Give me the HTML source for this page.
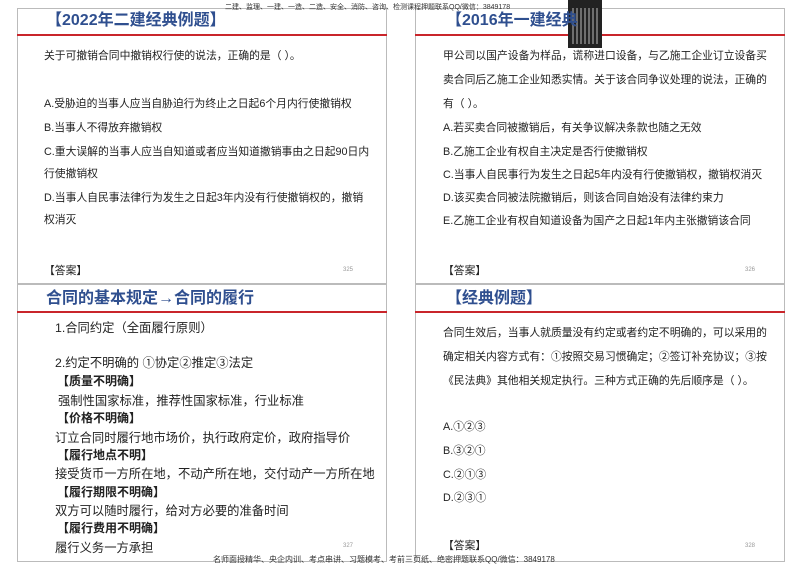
<!DOCTYPE html><html><head><meta charset="utf-8"><style>
body{margin:0;width:800px;height:566px;background:#fff;position:relative;overflow:hidden;font-family:"Liberation Sans","Noto Sans CJK SC",sans-serif;color:#222}
.p{position:absolute;border:1px solid #bbb;box-sizing:border-box}
.r{position:absolute;height:2px;background:#c9252b}
.t{position:absolute;white-space:nowrap}
.h{color:#2f4f8f;font-weight:bold;font-size:16px;line-height:20px}
.s{font-size:10.8px}
.m{font-size:12.3px}
.b{font-weight:bold;font-size:12px}
.n{font-size:6px;color:#999}
</style></head><body>
<div class="p" style="left:17px;top:8px;width:370px;height:276px"></div>
<div class="p" style="left:415px;top:8px;width:370px;height:276px"></div>
<div class="p" style="left:17px;top:284px;width:370px;height:278px"></div>
<div class="p" style="left:415px;top:284px;width:370px;height:278px"></div>
<div class="r" style="left:17px;top:34px;width:370px"></div>
<div class="r" style="left:415px;top:34px;width:370px"></div>
<div class="r" style="left:17px;top:311px;width:370px"></div>
<div class="r" style="left:415px;top:311px;width:370px"></div>
<div class="t" style="left:225px;top:2px;font-size:7px;color:#333">二建、监理、一建、一造、二造、安全、消防、咨询、检测课程押题联系QQ/微信：3849178</div>
<div style="position:absolute;left:568px;top:0;width:34px;height:48px;background:#222"></div>
<div style="position:absolute;left:572px;top:8px;width:26px;height:36px;background:repeating-linear-gradient(90deg,#777 0 2px,#222 2px 4px),#222;opacity:.9"></div>
<div class="t h" style="left:46px;top:11px">【2022年二建经典例题】</div>
<div class="t h" style="left:446px;top:11px">【2016年一建经典</div>
<div class="t s" style="left:44px;top:47px">关于可撤销合同中撤销权行使的说法，正确的是（ ）。</div>
<div class="t s" style="left:44px;top:95px">A.受胁迫的当事人应当自胁迫行为终止之日起6个月内行使撤销权</div>
<div class="t s" style="left:44px;top:119px">B.当事人不得放弃撤销权</div>
<div class="t s" style="left:44px;top:143px">C.重大误解的当事人应当自知道或者应当知道撤销事由之日起90日内</div>
<div class="t s" style="left:44px;top:165px">行使撤销权</div>
<div class="t s" style="left:44px;top:189px">D.当事人自民事法律行为发生之日起3年内没有行使撤销权的，撤销</div>
<div class="t s" style="left:44px;top:211px">权消灭</div>
<div class="t s" style="left:44px;top:262px">【答案】</div>
<div class="t n" style="left:343px;top:267px">325</div>
<div class="t s" style="left:443px;top:47px">甲公司以国产设备为样品，谎称进口设备，与乙施工企业订立设备买</div>
<div class="t s" style="left:443px;top:71px">卖合同后乙施工企业知悉实情。关于该合同争议处理的说法，正确的</div>
<div class="t s" style="left:443px;top:95px">有（ ）。</div>
<div class="t s" style="left:443px;top:119px">A.若买卖合同被撤销后，有关争议解决条款也随之无效</div>
<div class="t s" style="left:443px;top:143px">B.乙施工企业有权自主决定是否行使撤销权</div>
<div class="t s" style="left:443px;top:166px">C.当事人自民事行为发生之日起5年内没有行使撤销权，撤销权消灭</div>
<div class="t s" style="left:443px;top:189px">D.该买卖合同被法院撤销后，则该合同自始没有法律约束力</div>
<div class="t s" style="left:443px;top:212px">E.乙施工企业有权自知道设备为国产之日起1年内主张撤销该合同</div>
<div class="t s" style="left:443px;top:262px">【答案】</div>
<div class="t n" style="left:745px;top:267px">326</div>
<div class="t h" style="left:46px;top:289px">合同的基本规定→合同的履行</div>
<div class="t m" style="left:55px;top:318px">1.合同约定（全面履行原则）</div>
<div class="t m" style="left:55px;top:353px">2.约定不明确的 ①协定②推定③法定</div>
<div class="t b" style="left:57px;top:372px">【质量不明确】</div>
<div class="t m" style="left:58px;top:391px">强制性国家标准，推荐性国家标准，行业标准</div>
<div class="t b" style="left:57px;top:409px">【价格不明确】</div>
<div class="t m" style="left:55px;top:428px">订立合同时履行地市场价，执行政府定价，政府指导价</div>
<div class="t b" style="left:57px;top:446px">【履行地点不明】</div>
<div class="t m" style="left:55px;top:464px">接受货币一方所在地，不动产所在地，交付动产一方所在地</div>
<div class="t b" style="left:57px;top:483px">【履行期限不明确】</div>
<div class="t m" style="left:55px;top:501px">双方可以随时履行，给对方必要的准备时间</div>
<div class="t b" style="left:57px;top:519px">【履行费用不明确】</div>
<div class="t m" style="left:55px;top:538px">履行义务一方承担</div>
<div class="t n" style="left:343px;top:543px">327</div>
<div class="t h" style="left:446px;top:289px">【经典例题】</div>
<div class="t s" style="left:443px;top:324px">合同生效后，当事人就质量没有约定或者约定不明确的，可以采用的</div>
<div class="t s" style="left:443px;top:348px">确定相关内容方式有：①按照交易习惯确定；②签订补充协议；③按</div>
<div class="t s" style="left:443px;top:372px">《民法典》其他相关规定执行。三种方式正确的先后顺序是（ ）。</div>
<div class="t s" style="left:443px;top:418px">A.①②③</div>
<div class="t s" style="left:443px;top:442px">B.③②①</div>
<div class="t s" style="left:443px;top:466px">C.②①③</div>
<div class="t s" style="left:443px;top:489px">D.②③①</div>
<div class="t s" style="left:443px;top:537px">【答案】</div>
<div class="t n" style="left:745px;top:543px">328</div>
<div class="t" style="left:213px;top:554px;font-size:8px;color:#333">名师面授精华、央企内训、考点串讲、习题模考、考前三页纸、绝密押题联系QQ/微信：3849178</div>
</body></html>
